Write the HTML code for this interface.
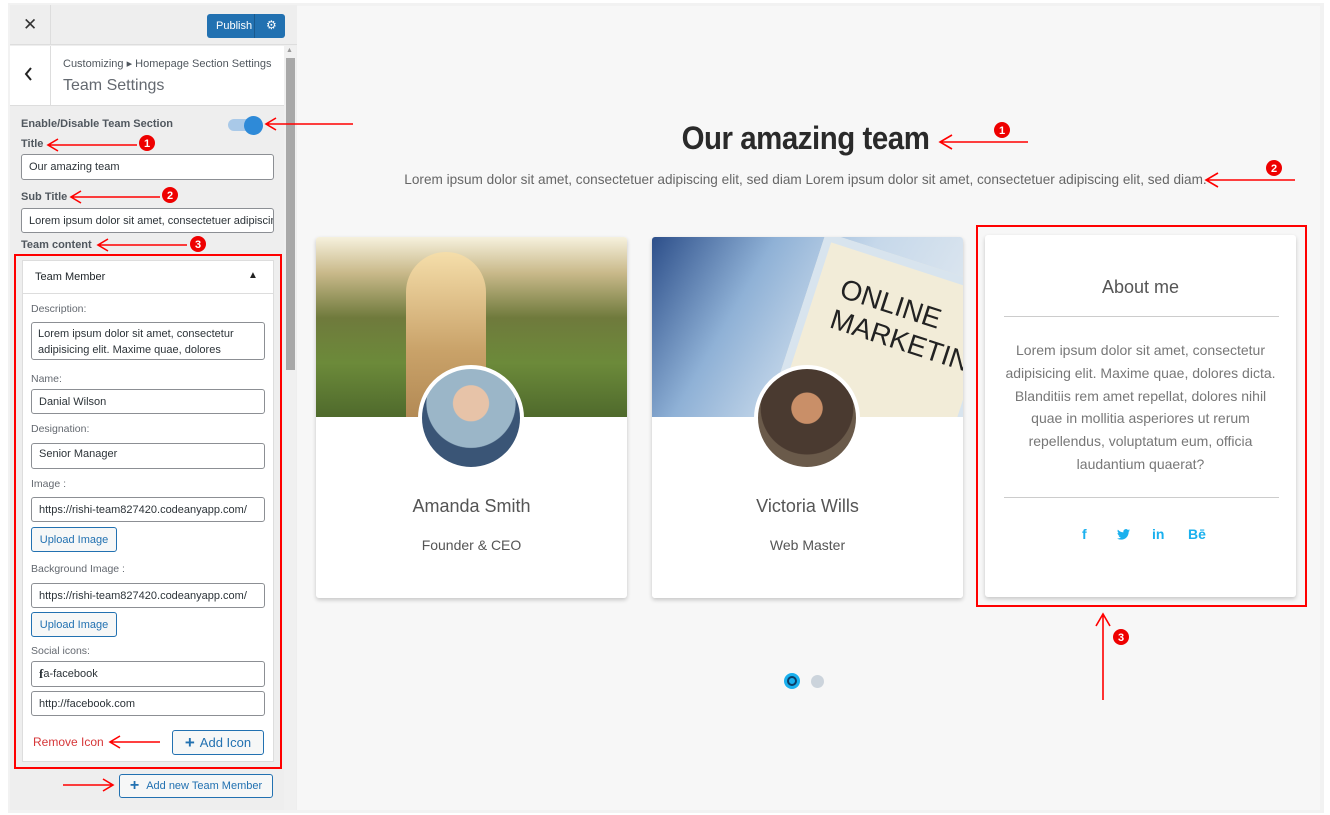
<!DOCTYPE html>
<html><head><meta charset="utf-8"><style>
*{box-sizing:border-box;margin:0;padding:0}
body{width:1330px;height:815px;position:relative;background:#fff;font-family:"Liberation Sans",sans-serif;overflow:hidden}
.a{position:absolute}
.panel{left:10px;top:5px;width:287px;height:805px;background:#eeeeee}
.lbl{position:absolute;font-size:11px;color:#50575e;font-weight:bold}
.slbl{position:absolute;font-size:10.5px;color:#646970}
.inp{position:absolute;background:#fff;border:1px solid #8c8f94;border-radius:3px;font-size:11px;color:#2c3338;padding:0 7px;display:flex;align-items:center;white-space:nowrap;overflow:hidden}
.btn{position:absolute;border:1px solid #2271b1;background:#f6f7f7;border-radius:3px;color:#2271b1;font-size:11px;display:flex;align-items:center;justify-content:center}
.card{position:absolute;background:#fff;border-radius:3px;box-shadow:0 2px 4px rgba(0,0,0,.2)}
.nm{position:absolute;width:100%;text-align:center;font-size:18px;color:#555}
.rl{position:absolute;width:100%;text-align:center;font-size:14px;color:#555}
</style></head><body>
<div class="a" style="left:8px;top:3px;width:1316px;height:810px;background:#f2f2f2"></div>
<div class="a panel"></div>
<div class="a" style="left:10px;top:5px;width:287px;height:40px;background:#eee;border-bottom:1px solid #ddd"></div>
<div class="a" style="left:50px;top:5px;width:1px;height:40px;background:#ddd"></div>
<div class="a" style="left:23px;top:15px;font-size:17px;color:#333">✕</div>
<div class="a" style="left:207px;top:14px;width:78px;height:24px;background:#2271b1;border-radius:3px;color:#fff;font-size:11px;padding:6px 0 0 9px">Publish <span style="position:absolute;left:59px;top:4px;font-size:12px">⚙</span></div>
<div class="a" style="left:254px;top:14px;width:1px;height:24px;background:#1a5a8e"></div>
<div class="a" style="left:10px;top:46px;width:274px;height:60px;background:#fff;border-bottom:1px solid #ddd"></div>
<div class="a" style="left:50px;top:46px;width:1px;height:59px;background:#ddd"></div>
<svg class="a" style="left:24px;top:67px" width="10" height="14"><path d="M7 1L2 7l5 6" fill="none" stroke="#222" stroke-width="2"/></svg>
<div class="a" style="left:63px;top:57px;font-size:11px;color:#50575e">Customizing ▸ Homepage Section Settings</div>
<div class="a" style="left:63px;top:77px;font-size:16px;color:#646970">Team Settings</div>
<div class="a" style="left:284px;top:46px;width:12px;height:764px;background:#f0f0f0"></div>
<div class="a" style="left:286px;top:58px;width:9px;height:312px;background:#a8a8a8"></div>
<div class="a" style="left:286px;top:47px;font-size:7px;color:#999">▲</div>
<div class="lbl" style="left:21px;top:118px">Enable/Disable Team Section</div>
<div class="a" style="left:228px;top:119px;width:30px;height:12px;border-radius:6px;background:#a9c9e8"></div>
<div class="a" style="left:244px;top:116px;width:19px;height:19px;border-radius:50%;background:#2e8ad8"></div>
<div class="lbl" style="left:21px;top:138px">Title</div>
<div class="inp" style="left:21px;top:154px;width:253px;height:26px">Our amazing team</div>
<div class="lbl" style="left:21px;top:191px">Sub Title</div>
<div class="inp" style="left:21px;top:208px;width:253px;height:25px">Lorem ipsum dolor sit amet, consectetuer adipiscing</div>
<div class="lbl" style="left:21px;top:239px">Team content</div>
<div class="a" style="left:22px;top:260px;width:252px;height:502px;background:#fff;border:1px solid #ddd"></div>
<div class="a" style="left:22px;top:293px;width:252px;height:1px;background:#ddd"></div>
<div class="lbl" style="left:35px;top:271px;color:#1d2327;font-weight:normal">Team Member</div>
<div class="a" style="left:248px;top:270px;font-size:10px;color:#222">▲</div>
<div class="slbl" style="left:31px;top:303px">Description:</div>
<div class="inp" style="left:31px;top:322px;width:234px;height:38px;align-items:flex-start;white-space:normal;padding:3px 16px 0 6px;line-height:16px">Lorem ipsum dolor sit amet, consectetur adipisicing elit. Maxime quae, dolores</div>
<div class="slbl" style="left:31px;top:373px">Name:</div>
<div class="inp" style="left:31px;top:389px;width:234px;height:25px">Danial Wilson</div>
<div class="slbl" style="left:31px;top:423px">Designation:</div>
<div class="inp" style="left:31px;top:443px;width:234px;height:26px;align-items:flex-start;padding-top:4px">Senior Manager</div>
<div class="slbl" style="left:31px;top:478px">Image :</div>
<div class="inp" style="left:31px;top:497px;width:234px;height:25px">https://rishi-team827420.codeanyapp.com/</div>
<div class="btn" style="left:31px;top:527px;width:86px;height:25px">Upload Image</div>
<div class="slbl" style="left:31px;top:563px">Background Image :</div>
<div class="inp" style="left:31px;top:583px;width:234px;height:25px">https://rishi-team827420.codeanyapp.com/</div>
<div class="btn" style="left:31px;top:612px;width:86px;height:25px">Upload Image</div>
<div class="slbl" style="left:31px;top:645px">Social icons:</div>
<div class="inp" style="left:31px;top:661px;width:234px;height:26px"><b style="font-family:'Liberation Serif';font-size:13px">f</b>a-facebook</div>
<div class="inp" style="left:31px;top:691px;width:234px;height:25px">http://facebook.com</div>
<div class="a" style="left:33px;top:735px;font-size:12px;color:#d63638">Remove Icon</div>
<div class="btn" style="left:172px;top:730px;width:92px;height:25px;font-size:13px"><b style="font-size:17px;margin-right:5px">+</b>Add Icon</div>
<div class="btn" style="left:119px;top:774px;width:154px;height:24px"><b style="font-size:16px;margin-right:7px">+</b>Add new Team Member</div>
<div class="a" style="left:14px;top:254px;width:268px;height:515px;border:2px solid #f00"></div>
<div class="a" style="left:297px;top:6px;width:1023px;height:804px;background:#f7f7f7"></div>
<div class="a" style="left:297px;top:120px;width:1017px;text-align:center;font-size:32px;color:#2a2a2a;font-weight:bold;letter-spacing:-0.5px;transform:scaleX(0.92)">Our amazing team</div>
<div class="a" style="left:297px;top:172px;width:1017px;text-align:center;font-size:13.6px;color:#666">Lorem ipsum dolor sit amet, consectetuer adipiscing elit, sed diam Lorem ipsum dolor sit amet, consectetuer adipiscing elit, sed diam.</div>
<div class="card" style="left:316px;top:237px;width:311px;height:361px;overflow:hidden">
 <div class="a" style="left:0;top:0;width:311px;height:180px;background:linear-gradient(180deg,#f6f1dd 0%,#c9b98a 20%,#6f7a3c 45%,#6c8a3a 70%,#4f6a2c 100%)"></div>
 <div class="a" style="left:90px;top:15px;width:80px;height:165px;border-radius:40px 40px 0 0;background:linear-gradient(180deg,#f5deaa,#c9a269 60%,#b38a55)"></div>
 <div class="a" style="left:102px;top:128px;width:106px;height:106px;border-radius:50%;background:radial-gradient(circle at 50% 35%,#e7c3a8 0 22%,#9bb6c8 23% 55%,#3a5576 56%);border:4px solid #fff"></div>
 <div class="nm" style="top:259px">Amanda Smith</div>
 <div class="rl" style="top:300px">Founder &amp; CEO</div>
</div>
<div class="card" style="left:652px;top:237px;width:311px;height:361px;overflow:hidden">
 <div class="a" style="left:0;top:0;width:311px;height:180px;background:linear-gradient(120deg,#2d4f8a 0%,#8fb1d6 30%,#c6d8ea 55%,#e9eef2 100%)"></div>
 <div class="a" style="left:140px;top:20px;width:190px;height:190px;background:#f2ecd8;transform:rotate(18deg);border:8px solid #d8e4ee"></div>
 <div class="a" style="left:180px;top:60px;font-size:28px;color:#222;transform:rotate(18deg)">ONLINE<br>MARKETING</div>
 <div class="a" style="left:0;top:180px;width:311px;height:181px;background:#fff"></div>
 <div class="a" style="left:102px;top:128px;width:106px;height:106px;border-radius:50%;background:radial-gradient(circle at 50% 40%,#c98f68 0 20%,#4a3a30 21% 60%,#6a5a4a 61%);border:4px solid #fff"></div>
 <div class="nm" style="top:259px">Victoria Wills</div>
 <div class="rl" style="top:300px">Web Master</div>
</div>
<div class="card" style="left:985px;top:235px;width:311px;height:362px">
 <div class="nm" style="top:42px">About me</div>
 <div class="a" style="left:19px;top:81px;width:275px;height:1px;background:#ccc"></div>
 <div class="a" style="left:20px;top:104px;width:271px;text-align:center;font-size:14px;line-height:22.8px;color:#777">Lorem ipsum dolor sit amet, consectetur adipisicing elit. Maxime quae, dolores dicta. Blanditiis rem amet repellat, dolores nihil quae in mollitia asperiores ut rerum repellendus, voluptatum eum, officia laudantium quaerat?</div>
 <div class="a" style="left:19px;top:262px;width:275px;height:1px;background:#ccc"></div>
 <div class="a" style="left:97px;top:291px;font-size:14px;font-weight:bold;color:#1ab0ee">f</div>
 <svg class="a" style="left:132px;top:294px" width="13" height="11" viewBox="0 0 24 20"><path d="M24 2.4a10 10 0 0 1-2.8.8A5 5 0 0 0 23.3.4a10 10 0 0 1-3.1 1.2A4.9 4.9 0 0 0 11.8 6 14 14 0 0 1 1.7.9a4.9 4.9 0 0 0 1.5 6.6A4.9 4.9 0 0 1 1 6.9a4.9 4.9 0 0 0 3.9 4.8 5 5 0 0 1-2.2.1 4.9 4.9 0 0 0 4.6 3.4A9.9 9.9 0 0 1 0 17.3 14 14 0 0 0 7.5 19.5c9 0 14-7.5 14-14v-.6A10 10 0 0 0 24 2.4z" fill="#1ab0ee"/></svg>
 <div class="a" style="left:167px;top:291px;font-size:14px;font-weight:bold;color:#1ab0ee">in</div>
 <div class="a" style="left:203px;top:291px;font-size:14px;font-weight:bold;color:#1ab0ee">Bē</div>
</div>
<div class="a" style="left:976px;top:225px;width:331px;height:382px;border:2px solid #f00"></div>
<div class="a" style="left:784px;top:673px;width:16px;height:16px;border-radius:50%;background:#1ab0ee"></div>
<div class="a" style="left:787px;top:676px;width:10px;height:10px;border-radius:50%;border:2px solid #0c3d66"></div>
<div class="a" style="left:811px;top:675px;width:13px;height:13px;border-radius:50%;background:#ccd4dc"></div>
<svg class="a" style="left:0;top:0" width="1330" height="815">
<g stroke="#f00" stroke-width="1.6" fill="none">
<path d="M266 124H353M276 118l-10 6 10 6"/>
<path d="M48 145H137M58 139l-10 6 10 6"/>
<path d="M71 197H160M81 191l-10 6 10 6"/>
<path d="M98 245H187M108 239l-10 6 10 6"/>
<path d="M110 742H160M120 736l-10 6 10 6"/>
<path d="M63 785H113M103 779l10 6-10 6"/>
<path d="M940 142H1028M952 135l-12 7 12 7"/>
<path d="M1206 180H1295M1218 173l-12 7 12 7"/>
<path d="M1103 614V700M1096 626l7-12 7 12"/>
</g>
<g fill="#e00">
<circle cx="147" cy="143" r="8"/><circle cx="170" cy="195" r="8"/><circle cx="198" cy="244" r="8"/>
<circle cx="1002" cy="130" r="8"/><circle cx="1274" cy="168" r="8"/><circle cx="1121" cy="637" r="8"/>
</g>
<g fill="#fff" font-family="Liberation Sans" font-weight="bold" font-size="11" text-anchor="middle">
<text x="147" y="147">1</text><text x="170" y="199">2</text><text x="198" y="248">3</text>
<text x="1002" y="134">1</text><text x="1274" y="172">2</text><text x="1121" y="641">3</text>
</g>
</svg>
</body></html>
